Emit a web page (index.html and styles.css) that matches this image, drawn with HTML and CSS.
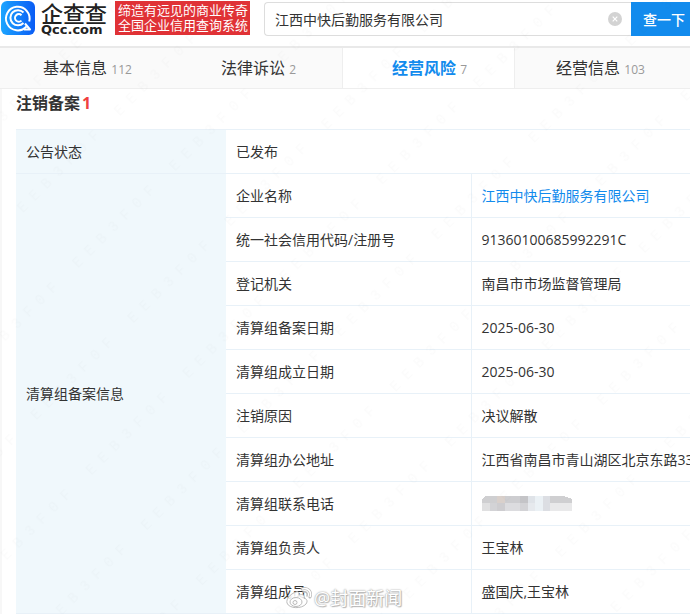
FILE: index.html
```html
<!DOCTYPE html>
<html lang="zh-CN">
<head>
    <meta charset="UTF-8">
    <meta name="viewport" content="width=device-width, initial-scale=1.0">
    <title>企查查</title>
    <link rel="stylesheet" href="styles.css">
</head>
<body>

    <header class="header">
        <a href="#" class="logo">
            <svg class="logo-icon" viewBox="0 0 34 34" aria-hidden="true">
                <defs>
                    <linearGradient id="logoBlue" x1="0" y1="0" x2="1" y2="0">
                        <stop offset="0" stop-color="#1ca5ff"/>
                        <stop offset="1" stop-color="#0a5cf5"/>
                    </linearGradient>
                </defs>
                <rect width="34" height="34" rx="6" fill="url(#logoBlue)"/>
                <g fill="none" stroke="#fff" stroke-width="2">
                    <path d="M25.500 25.500A11.800 11.800 0 1 1 28.200 20.500"/>
                    <path d="M23 28.500H29L24 22.500" stroke-linejoin="round"/>
                    <path d="M22.500 11.500A7.600 7.600 0 1 0 22.500 22"/>
                    <path d="M20.500 14.200A3.800 3.800 0 1 0 20.500 19.600"/>
                </g>
            </svg>
            <span class="logo-text">
                <span class="logo-name">企查查</span>
                <span class="logo-domain">Qcc.com</span>
            </span>
        </a>
        <div class="slogan">
            <div>缔造有远见的商业传奇</div>
            <div>全国企业信用查询系统</div>
        </div>
        <form class="search">
            <div class="search-box">
                <input type="text" class="search-input" aria-label="搜索企业" value="江西中快后勤服务有限公司">
                <button type="reset" class="search-clear" aria-label="清除">
                    <svg viewBox="0 0 14 14" aria-hidden="true">
                        <circle cx="7" cy="7" r="7" fill="#d3d3d3"/>
                        <path d="M4.7 4.7l4.6 4.6M9.3 4.7l-4.6 4.6" stroke="#fff" stroke-width="1.2"/>
                    </svg>
                </button>
            </div>
            <button type="submit" class="search-btn">查一下</button>
        </form>
    </header>

    <nav class="tabs">
        <a href="#" class="tab">基本信息 <span class="tab-count">112</span></a>
        <a href="#" class="tab">法律诉讼 <span class="tab-count">2</span></a>
        <a href="#" class="tab active">经营风险 <span class="tab-count">7</span></a>
        <a href="#" class="tab">经营信息 <span class="tab-count">103</span></a>
    </nav>

    <main class="content">
        <h2 class="section-title">注销备案<span class="section-count">1</span></h2>

        <table class="info-table">
            <colgroup>
                <col class="col-group">
                <col class="col-name">
                <col>
            </colgroup>
            <tr>
                <th>公告状态</th>
                <td colspan="2">已发布</td>
            </tr>
            <tr>
                <th rowspan="10">清算组备案信息</th>
                <td>企业名称</td>
                <td><a href="#" class="company">江西中快后勤服务有限公司</a></td>
            </tr>
            <tr>
                <td>统一社会信用代码/注册号</td>
                <td>91360100685992291C</td>
            </tr>
            <tr>
                <td>登记机关</td>
                <td>南昌市市场监督管理局</td>
            </tr>
            <tr>
                <td>清算组备案日期</td>
                <td>2025-06-30</td>
            </tr>
            <tr>
                <td>清算组成立日期</td>
                <td>2025-06-30</td>
            </tr>
            <tr>
                <td>注销原因</td>
                <td>决议解散</td>
            </tr>
            <tr>
                <td>清算组办公地址</td>
                <td>江西省南昌市青山湖区北京东路33</td>
            </tr>
            <tr>
                <td>清算组联系电话</td>
                <td>
                    <svg class="mosaic" viewBox="0 0 90 15" shape-rendering="crispEdges" aria-hidden="true">
                        <path d="M3 0H82L90 3V15H0V4Z" fill="#dcdcdf"/>
                        <path d="M3 0H15V7H0V4Z" fill="#cfcfd1"/>
                        <path d="M15 0h8v7h-8z" fill="#d9d0cb"/>
                        <path d="M23 0h15v7h-15z" fill="#cdcdd0"/>
                        <path d="M38 0h8v7h-8z" fill="#c4c4c7"/>
                        <path d="M46 0h7v7h-7z" fill="#dfe3e8"/>
                        <path d="M53 0h8v15h-8z" fill="#ebf1f5"/>
                        <path d="M61 0h7v15h-7z" fill="#dcdee3"/>
                        <path d="M68 0H82L90 3V7H68z" fill="#cfcfd1"/>
                        <path d="M0 7h8v8h-8z" fill="#e0e0e1"/>
                        <path d="M8 7h7v8h-7z" fill="#d3d3d6"/>
                        <path d="M15 7h8v8h-8z" fill="#cecdd0"/>
                        <path d="M38 7h8v8h-8z" fill="#d3d3d6"/>
                        <path d="M46 7h7v8h-7z" fill="#e6e9ed"/>
                        <path d="M68 7h22v8h-22z" fill="#e9e9ea"/>
                    </svg>
                </td>
            </tr>
            <tr>
                <td>清算组负责人</td>
                <td>王宝林</td>
            </tr>
            <tr>
                <td>清算组成员</td>
                <td>盛国庆,王宝林</td>
            </tr>
        </table>

        <div class="source">
            <svg class="source-icon" viewBox="0 0 26 22" aria-hidden="true">
                <g fill="#fff" fill-opacity="0.85" stroke="#bbb" stroke-width="1">
                    <path d="M10 5C4 7 0 12 1 16c2 6 15 6 19 1 2-3 1-5-2-6 1-3-1-4-5-3 0-2 0-4-3-3z"/>
                    <ellipse cx="10" cy="15" rx="6" ry="4.5"/>
                    <circle cx="9" cy="15.500" r="2"/>
                </g>
                <g fill="none" stroke="#bbb" stroke-linecap="round">
                    <path d="M16 2c6-2 10 3 8 8" stroke-width="3"/>
                    <path d="M17 5c3-1 5 1 4 4" stroke-width="1.500"/>
                </g>
                <path d="M16 2c6-2 10 3 8 8" fill="none" stroke="#fff" stroke-width="1.500"/>
            </svg>
            <span>@封面新闻</span>
        </div>
    </main>

    <svg class="watermark" aria-hidden="true">
        <defs>
            <pattern id="mark" width="137" height="78" patternUnits="userSpaceOnUse" patternTransform="translate(83 470) rotate(-45)">
                <text x="2" y="10" class="watermark-text">E E B 3 F 0 F</text>
            </pattern>
        </defs>
        <rect width="100%" height="100%" fill="url(#mark)"/>
    </svg>

</body>
</html>
```

FILE: styles.css
```css
* {
    box-sizing: border-box;
}

body {
    margin: 0;
    font-family: "Open Sans", "Noto Sans CJK SC", sans-serif;
    font-size: 14px;
    color: #333;
    background-color: #fff;
    position: relative;
    overflow: hidden;
}

a {
    color: inherit;
    text-decoration: none;
}

button {
    border: none;
    padding: 0;
    font-family: inherit;
    cursor: pointer;
}

.header {
    display: flex;
    align-items: flex-start;
    height: 48px;
    padding: 1px 0 0 1px;
    border-bottom: 2px solid #e9e9e9;
}

.logo {
    display: flex;
    gap: 6px;
    width: 114px;
}

.logo-icon {
    width: 34px;
    height: 34px;
    flex: none;
}

.logo-text {
    display: flex;
    flex-direction: column;
    color: #222;
}

.logo-name {
    font-family: "Noto Sans CJK SC", sans-serif;
    font-size: 22px;
    font-weight: 500;
    line-height: 22px;
}

.logo-domain {
    font-family: "DejaVu Sans", sans-serif;
    font-size: 13px;
    font-weight: bold;
    line-height: 14px;
}

.slogan {
    flex: none;
    padding: 2px 2px 2px 3px;
    background-color: #e03236;
    color: #fff;
    font-size: 13px;
    line-height: 15px;
    white-space: nowrap;
}

.search {
    display: flex;
    flex: 1;
    margin: 1px 0 0 14px;
}

.search-box {
    position: relative;
    flex: 1;
}

.search-input {
    width: 100%;
    height: 34px;
    padding: 0 30px 0 10px;
    border: 1px solid #ddd;
    border-right: none;
    border-radius: 4px 0 0 4px;
    font-family: inherit;
    font-size: 14px;
    color: #333;
    outline: none;
}

.search-clear {
    position: absolute;
    top: 10px;
    right: 9px;
    width: 14px;
    height: 14px;
    background: none;
}

.search-clear svg {
    display: block;
}

.search-btn {
    flex: none;
    height: 34px;
    padding: 0 5px 0 12px;
    background-color: #128bed;
    color: #fff;
    font-size: 14px;
    font-weight: 500;
}

.tabs {
    display: flex;
    height: 41px;
    padding-left: 1px;
    background-color: #fafafa;
    border-bottom: 1px solid #eee;
}

.tab {
    flex: 0 0 171px;
    padding-left: 2px;
    text-align: center;
    font-size: 16px;
    line-height: 40px;
    white-space: nowrap;
}

.tab.active {
    background-color: #fff;
    box-shadow: -1px 0 #eee, 1px 0 #eee;
    color: #128bed;
    font-weight: bold;
}

.tab-count {
    font-size: 12px;
    font-weight: normal;
    color: #999;
}

.content {
    position: relative;
    border-left: 2px solid #f7f7f7;
    padding: 3px 0 0 14px;
}

.section-title {
    margin: 0 0 15px;
    font-size: 16px;
    line-height: 22px;
}

.section-count {
    margin-left: 2px;
    color: #f04040;
}

.info-table {
    width: 100%;
    table-layout: fixed;
    border-collapse: collapse;
    border-top: 1px solid #e8f1f8;
}

.info-table th,
.info-table td {
    height: 44px;
    padding: 0 0 0 10px;
    border-bottom: 1px solid #e8f1f8;
    text-align: left;
    font-weight: normal;
    line-height: 20px;
    white-space: nowrap;
}

.info-table th {
    background-color: #f0f8fc;
}

.info-table td + td {
    border-left: 1px solid #e8f1f8;
}

.col-group {
    width: 210px;
}

.col-name {
    width: 245px;
}

.company {
    color: #128bed;
}

.mosaic {
    display: block;
    width: 90px;
    height: 15px;
}

.source {
    position: absolute;
    left: 284px;
    bottom: 4px;
    display: flex;
    align-items: center;
    gap: 2px;
    font-size: 18px;
    line-height: 24px;
    color: #fff;
    text-shadow: 0 0 1px #aaa, 0 0 2px #aaa, 1px 1px 1px #bbb;
}

.source-icon {
    width: 26px;
    height: 22px;
}

.watermark {
    position: absolute;
    top: 0;
    left: 0;
    width: 100%;
    height: 100%;
    pointer-events: none;
}

.watermark-text {
    font-family: "Liberation Mono", monospace;
    font-size: 14px;
    fill: #000;
    fill-opacity: 0.015;
}
```
